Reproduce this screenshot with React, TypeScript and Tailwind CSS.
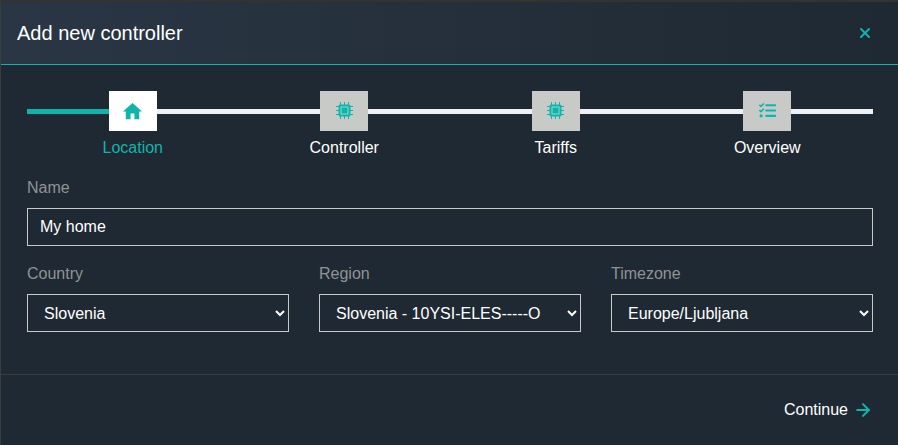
import { ArrowRight, X } from 'lucide-react';
import { FaTasks } from 'react-icons/fa';
import { MdHome } from 'react-icons/md';
import type { ReactNode } from 'react';

function ChipIcon() {
  return (
    <svg viewBox="0 0 17 17" className="h-[17px] w-[17px] -translate-y-px" aria-hidden="true">
      <rect x="2.5" y="2.5" width="12" height="12" rx="1.5" fill="currentColor" />
      <rect x="5" y="5" width="7" height="7" fill="currentColor" stroke="#8fd8d2" strokeWidth="1" />
      <path
        d="M4.5 0v3M8.5 0v3M12.5 0v3M4.5 14v3M8.5 14v3M12.5 14v3M0 4.5h3M0 8.5h3M0 12.5h3M14 4.5h3M14 8.5h3M14 12.5h3"
        stroke="currentColor"
        strokeWidth="1"
      />
    </svg>
  );
}

const steps: { label: string; icon: ReactNode; active?: boolean }[] = [
  { label: 'Location', icon: <MdHome className="h-[23px] w-[23px]" />, active: true },
  { label: 'Controller', icon: <ChipIcon /> },
  { label: 'Tariffs', icon: <ChipIcon /> },
  { label: 'Overview', icon: <FaTasks className="h-[17px] w-[17px] -translate-y-px" /> },
];

function SelectField({ label, value }: { label: string; value: string }) {
  return (
    <div className="min-w-0">
      <label className="mb-2 block h-[24px] text-base leading-6 text-[#909396]">{label}</label>
      <select
        defaultValue={value}
        className="h-[38px] w-full rounded-none border border-[#c8cac8] bg-[#1f2933] pl-3 pr-1 text-base text-white outline-none"
      >
        <option value={value} className="bg-[#1f2933]">
          {value}
        </option>
      </select>
    </div>
  );
}

export default function App() {
  return (
    <div className="flex h-[445px] w-[898px] flex-col border-t-2 border-l border-t-[#333] border-l-[#3a3d3f] bg-[#1f2933] font-['Liberation_Sans',Arial,sans-serif] text-white">
      {/* Header */}
      <div className="flex h-[63px] shrink-0 items-center justify-between border-b border-[#0fb5ab] bg-gradient-to-r from-[#2a3644] to-[#1f2933] pl-4 pr-[25px]">
        <h1 className="text-xl leading-6">Add new controller</h1>
        <X className="h-4 w-4 text-[#0fb5ab]" strokeWidth={3} />
      </div>

      {/* Stepper */}
      <div className="relative ml-[26px] mr-[25px] mt-[26px] grid shrink-0 grid-cols-4">
        <div className="absolute inset-x-0 top-[18px] h-[5px] bg-[#eef0f3]" />
        <div className="absolute left-0 top-[18px] h-[5px] w-[90px] bg-[#0fb5ab]" />
        {steps.map((s) => (
          <div key={s.label} className="relative flex flex-col items-center">
            <div
              className={`flex h-10 w-12 items-center justify-center text-[#0fb5ab] ${
                s.active ? 'bg-white' : 'bg-[#c8cac8]'
              }`}
            >
              {s.icon}
            </div>
            <span className={`mt-[5px] text-base leading-6 ${s.active ? 'text-[#0fb5ab]' : 'text-white'}`}>{s.label}</span>
          </div>
        ))}
      </div>

      {/* Form */}
      <div className="ml-[26px] mr-[25px] mt-4 shrink-0">
        <label className="mb-2 block h-[24px] text-base leading-6 text-[#909396]">Name</label>
        <input
          defaultValue="My home"
          className="block h-[38px] w-full border border-[#c8cac8] bg-transparent px-3 text-base text-white outline-none"
        />
        <div className="mt-4 grid grid-cols-3 gap-[30px]">
          <SelectField label="Country" value="Slovenia" />
          <SelectField label="Region" value="Slovenia - 10YSI-ELES-----O" />
          <SelectField label="Timezone" value="Europe/Ljubljana" />
        </div>
      </div>

      {/* Footer */}
      <div className="mt-[42px] flex flex-1 items-center justify-end border-t border-[#373c3e] pr-[25px]">
        <button type="button" className="flex items-center gap-[5px] text-base text-white">
          Continue
          <ArrowRight className="h-5 w-5 text-[#0fb5ab]" strokeWidth={2.4} />
        </button>
      </div>
    </div>
  );
}
